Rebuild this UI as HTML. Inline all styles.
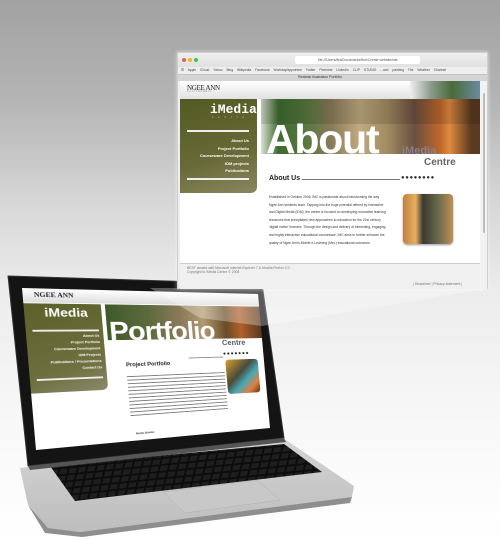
<!DOCTYPE html>
<html><head><meta charset="utf-8"><style>
*{margin:0;padding:0;box-sizing:border-box}
body{width:500px;height:540px;overflow:hidden;position:relative;font-family:"Liberation Sans",sans-serif;
background:linear-gradient(#a2a2a2 0px,#b4b4b4 100px,#d6d6d6 200px,#ececec 290px,#f6f6f6 400px,#fff 540px)}
.a{position:absolute}
.t{font-size:4px;color:#555;white-space:nowrap}
</style></head><body>

<svg class="a" style="left:0;top:0" width="500" height="540">
<defs>
<linearGradient id="base" x1="0" y1="0" x2="0" y2="1"><stop offset="0" stop-color="#d4d4d4"/><stop offset="1" stop-color="#bdbdbd"/></linearGradient>
<pattern id="keys" width="9" height="7" patternUnits="userSpaceOnUse" patternTransform="skewX(-20) rotate(-6)"><rect width="9" height="7" fill="#0c0c0c"/><rect x="1" y="1" width="7" height="5" fill="#1e1e1e"/></pattern>
</defs>
<polygon points="20,468 286,440 354,486 352,497 80,532 48,528 28,505" fill="url(#base)"/>
<polygon points="28,505 48,528 80,532 352,497 350,503 82,537 45,533" fill="#8e8e8e"/>
<polygon points="50,466 284,444 322,472 75,501" fill="url(#keys)"/>
<polygon points="163,492 257,480 280,500 185,513" fill="#c8c8c8" stroke="#b0b0b0" stroke-width="0.5"/>
<polygon points="8,276 262,284 284,438 28,466" fill="#141414" stroke="#333" stroke-width="1" stroke-linejoin="round"/>
<polygon points="28,466 284,438 286,442 30,470" fill="#555"/>
</svg>

<div class="a" style="left:0;top:0;width:250px;height:170px;background:#fff;overflow:hidden;transform-origin:0 0;transform:matrix3d(1.1593,0.26932,0,0.0008344,0.08188,0.94724,0,-0.00001265,0,0,1,0,22,288,0,1)">
 <div class="a" style="left:0;top:0;width:250px;height:15px;background:linear-gradient(#fff,#ddd)"></div>
 <div class="a" style="left:10px;top:3px;font:bold 7px 'Liberation Serif',serif;color:#222">NGEE ANN</div>
 <div class="a" style="left:0;top:16px;width:72px;height:95px;background:linear-gradient(160deg,#5a6128,#6e7040 70%,#8a8a6a);border-bottom-right-radius:6px"></div>
 <div class="a" style="left:18px;top:18px;font:bold 13px 'Liberation Sans';color:#fff">iMedia</div>
 <div class="a" style="left:6px;top:44px;width:62px;height:1.5px;background:#eee"></div>
 <div class="a t" style="right:182px;top:48px;color:#fff;font-weight:bold;text-align:right;line-height:7px;font-size:3.6px">About Us<br>Project Portfolio<br>Courseware Development<br>IDM Projects<br>Publications / Presentations<br>Contact Us</div>
 <div class="a" style="left:6px;top:96px;width:62px;height:1.5px;background:#eee"></div>
 <div class="a" style="left:76px;top:16px;width:174px;height:40px;background:linear-gradient(90deg,#3f5a2a,#5c6b3c 25%,#8a7a5a 45%,#b09a70 60%,#6a4a28 75%,#b0602a 85%,#5a3a20)"></div>
 <div class="a" style="left:78px;top:30px;font:bold 30px 'Liberation Sans';color:#fff;letter-spacing:-1px">Portfolio</div>
 <div class="a" style="left:200px;top:56px;font:bold 9px 'Liberation Sans';color:#555">Centre</div>
 <div class="a" style="left:92px;top:82px;font:bold 6px 'Liberation Sans';color:#222">Project Portfolio</div>
 <div class="a" style="left:160px;top:78px;width:40px;height:1px;background:#888"></div>
 <div class="a" style="left:200px;top:72px;font:bold 6px 'Liberation Sans';color:#222;letter-spacing:1px">●●●●●●●</div>
 <div class="a" style="left:92px;top:94px;width:108px;height:50px;background:repeating-linear-gradient(#fff 0 3px,#777 3px 4px)"></div>
 <div class="a" style="left:202px;top:82px;width:40px;height:42px;border-radius:4px;background:linear-gradient(135deg,#d8a030,#4a4a3a 40%,#48a8b8 60%,#e08040 80%,#603010)"></div>
 <div class="a" style="left:96px;top:160px;font:bold 3px sans-serif;color:#333">Media Builder</div>
</div>

<svg class="a" style="left:0;top:0" width="500" height="540">
<polygon points="150,288 490,288 262,326 200,318" fill="#fff" opacity="0.3"/>
</svg>

<div class="a" style="left:177px;top:52px;width:311px;height:237px;background:#eee;border:1px solid #cfcfcf;box-shadow:0 0 4px rgba(255,255,255,.6)">
 <div class="a" style="left:0;top:0;width:309px;height:14px;background:linear-gradient(#efefef,#e1e1e1)">
  <div class="a" style="left:4px;top:5px;width:4px;height:4px;border-radius:50%;background:#f25a52"></div>
  <div class="a" style="left:10px;top:5px;width:4px;height:4px;border-radius:50%;background:#f4b42c"></div>
  <div class="a" style="left:16px;top:5px;width:4px;height:4px;border-radius:50%;background:#3ec540"></div>
  <div class="a" style="left:117px;top:3px;width:125px;height:8px;background:#fff;border-radius:2px"></div>
  <div class="a t" style="left:140px;top:5px;font-size:3.5px">file:///Users/ftra/Documents/ftori/Create website/site</div>
 </div>
 <div class="a t" style="left:3px;top:15px;font-size:3.3px;color:#444;word-spacing:3px">☰ Apple iCloud Yahoo Bing Wikipedia Facebook Workday/appointee Twitter Pinterest LinkedIn CLIP STUDIO ...and painting The Weather Channel</div>
 <div class="a" style="left:0;top:21px;width:309px;height:7px;background:#d4d4d4;border-top:1px solid #c4c4c4"></div>
 <div class="a t" style="left:120px;top:22px;font-size:3.5px;color:#333">Realistic Illustration Portfolio</div>
 <div class="a" style="left:2px;top:28px;width:300px;height:208px;background:#fff"></div>
 <div class="a" style="left:302px;top:28px;width:7px;height:208px;background:#f2f2f2"></div>
 <div class="a" style="left:305px;top:40px;width:2px;height:140px;background:#bbb;border-radius:1px"></div>
 <div class="a" style="left:2px;top:28px;width:300px;height:18px;background:linear-gradient(#fff,#e2e2e2)"></div>
 <div class="a" style="left:232px;top:28px;width:70px;height:18px;background:linear-gradient(90deg,rgba(240,240,240,1),#8a9a8a 30%,#4a6a3a 60%,#6a8aa0)"></div>
 <div class="a" style="left:9px;top:31px;font:7px 'Liberation Serif',serif;color:#222;letter-spacing:-.3px">NGEE ANN</div>
 <div class="a" style="left:9px;top:38px;font:2px sans-serif;color:#444;letter-spacing:1px">POLYTECHNIC</div>
 <div class="a" style="left:2px;top:46px;width:77px;height:94px;background:linear-gradient(165deg,#535a22,#676a36 60%,#8a8660);border-bottom-right-radius:6px"></div>
 <div class="a" style="left:32px;top:49px;font:bold 13px 'Liberation Mono',monospace;color:#fff">iMedia</div>
 <div class="a" style="left:34px;top:63px;font:2.5px sans-serif;color:#ddd;letter-spacing:5px">centre</div>
 <div class="a" style="left:9px;top:77px;width:62px;height:1.5px;background:#eee"></div>
 <div class="a t" style="right:238px;top:84px;color:#fff;font-weight:bold;text-align:right;line-height:7.5px;font-size:4px">About Us<br>Project Portfolio<br>Courseware Development<br>IDM projects<br>Publications</div>
 <div class="a" style="left:9px;top:125px;width:62px;height:1.5px;background:#eee"></div>
 <div class="a" style="left:83px;top:46px;width:219px;height:55px;background:linear-gradient(90deg,#d8e0d0,#3e6a30 8%,#5a7a40 22%,#8a7a5a 32%,#c0aa80 45%,#a08a60 58%,#6a5040 70%,#c0682a 82%,#e08a40 86%,#5a3a20 96%)"></div>
 <div class="a" style="left:83px;top:46px;width:219px;height:25px;background:rgba(0,0,0,.12)"></div>
 <div class="a" style="left:88px;top:66px;font:bold 41px 'Liberation Sans';color:#fff;letter-spacing:-1.2px;line-height:40px">About</div>
 <div class="a" style="left:224px;top:92px;font:bold 11px 'Liberation Sans';color:#8a8090">iMedia</div>
 <div class="a" style="left:246px;top:104px;font:bold 10px 'Liberation Sans';color:#666">Centre</div>
 <div class="a" style="left:91px;top:122px;font:bold 7px 'Liberation Sans';color:#222">About Us</div>
 <div class="a" style="left:124px;top:126px;width:98px;height:1px;background:#777"></div>
 <div class="a" style="left:223px;top:122px;font:bold 6px 'Liberation Sans';color:#333;letter-spacing:.6px">●●●●●●●●</div>
 <div class="a t" style="left:91px;top:141px;font-size:3.3px;line-height:7.6px;color:#333">Established in October 2006, IMC is passionate about transforming the way<br>Ngee Ann students learn. Tapping into the huge potential offered by Interactive<br>and Digital Media (IDM), the centre is focused on developing innovative learning<br>resources that precipitates new approaches to education for the 21st century<br>'digital native' learners. Through the design and delivery of interesting, engaging<br>and highly interactive educational courseware, IMC aims to further enhance the<br>quality of Ngee Ann's Mobile e-Learning (MeL) educational outcomes.</div>
 <div class="a" style="left:225px;top:141px;width:50px;height:50px;border-radius:4px;background:linear-gradient(90deg,#c08040,#e8b060 25%,#3a3a30 40%,#6a6a50 70%,#c09050);box-shadow:0 1px 2px #999"></div>
 <div class="a" style="left:2px;top:210px;width:300px;height:26px;background:#f0f0f0;border-top:1px solid #ccc"></div>
 <div class="a t" style="left:9px;top:213px;font-size:3.4px;line-height:4px;color:#777">BEST viewed with Microsoft Internet Explorer 7 &amp; Mozilla Firefox 2.0<br>Copyright to iMedia Centre © 2008</div>
 <div class="a t" style="left:235px;top:229px;font-size:3.4px;color:#777">| Disclaimer | Privacy statement |</div>
</div>

</body></html>
